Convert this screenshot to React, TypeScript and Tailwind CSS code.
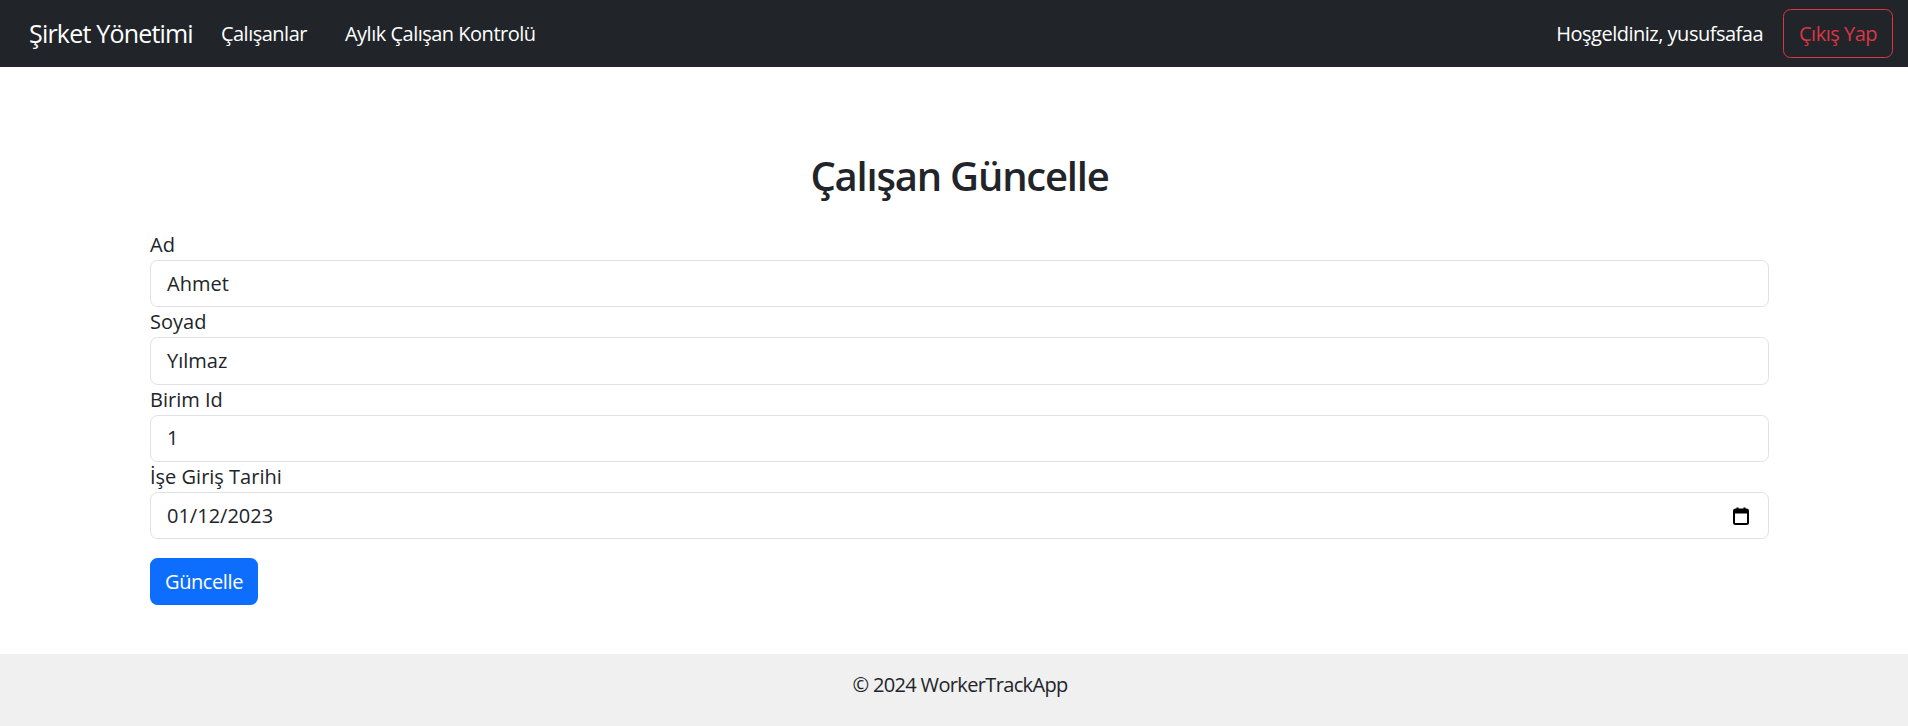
import React from "react";

function CalendarIcon() {
  return (
    <svg width="16" height="18" viewBox="0 0 16 18" className="block">
      <rect x="1" y="2.5" width="14" height="14.5" rx="1.5" fill="none" stroke="#000" strokeWidth="2" />
      <rect x="1" y="2.5" width="14" height="4" fill="#000" />
      <rect x="3.5" y="0.5" width="2" height="3" fill="#000" />
      <rect x="10.5" y="0.5" width="2" height="3" fill="#000" />
    </svg>
  );
}

function Field({ label, value, date }: { label: string; value: string; date?: boolean }) {
  return (
    <div className="flex flex-col">
      <label className="h-[30px] leading-[30px] text-[20px] text-[#212529]">{label}</label>
      <div className="h-[47.3px] flex items-center justify-between border border-[#dee2e6] rounded-[7.5px] pl-[16px] pr-[19px] text-[20px] text-[#212529] bg-white">
        <span>{value}</span>
        {date ? <CalendarIcon /> : null}
      </div>
    </div>
  );
}

export default function App() {
  return (
    <div className="min-h-[726px] bg-white font-['Open_Sans',sans-serif] text-[#212529] flex flex-col">
      <nav className="h-[67px] bg-[#212529] flex items-center justify-between pl-[29px] pr-[15px]">
        <div className="flex items-center">
          <span className="text-[25px] text-white tracking-[-0.8px] mr-[28px]">Şirket Yönetimi</span>
          <span className="text-[20px] text-white tracking-[-0.5px] mr-[38px]">Çalışanlar</span>
          <span className="text-[20px] text-white tracking-[-0.5px]">Aylık Çalışan Kontrolü</span>
        </div>
        <div className="flex items-center">
          <span className="text-[20px] text-white tracking-[-0.5px] mr-[20px]">Hoşgeldiniz, yusufsafaa</span>
          <button className="h-[49px] w-[110px] border border-[#dc3545] text-[#dc3545] rounded-[7.5px] text-[20px] tracking-[-0.5px]">
            Çıkış Yap
          </button>
        </div>
      </nav>

      <main className="flex-1 pt-[85px] pb-[49px] pl-[150px] pr-[139px]">
        <h2 className="h-[48px] leading-[48px] text-center text-[40px] font-semibold tracking-[-1.2px] mb-[30px]">
          Çalışan Güncelle
        </h2>
        <div className="flex flex-col">
          <Field label="Ad" value="Ahmet" />
          <Field label="Soyad" value="Yılmaz" />
          <Field label="Birim Id" value="1" />
          <Field label="İşe Giriş Tarihi" value="01/12/2023" date />
        </div>
        <button className="mt-[19px] h-[47.3px] w-[108px] bg-[#0d6efd] text-white rounded-[7.5px] text-[20px] tracking-[-0.4px]">
          Güncelle
        </button>
      </main>

      <footer className="bg-[#f0f0f0] h-[80px] pt-[16px] pl-[12px] text-center text-[20px] leading-[30px] tracking-[-0.65px] text-[#212529]">
        © 2024 WorkerTrackApp
      </footer>
    </div>
  );
}
